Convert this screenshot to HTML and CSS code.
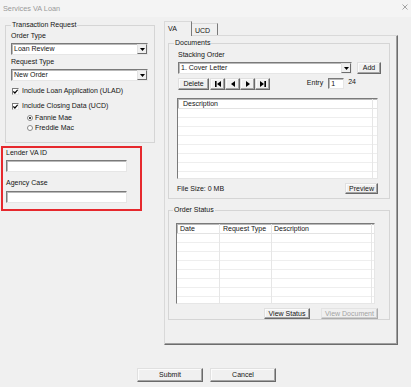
FILE: index.html
```html
<!DOCTYPE html>
<html>
<head>
<meta charset="utf-8">
<title>Services VA Loan</title>
<link rel="stylesheet" href="styles.css">
</head>
<body>
<div class="window">
  <div class="titlebar">
    <span class="title">Services VA Loan</span>
    <svg class="close" width="6" height="6" viewBox="0 0 6 6"><path d="M0.5 0.5 L5.5 5.5 M5.5 0.5 L0.5 5.5" stroke="#9a9a9a" stroke-width="0.9" fill="none"/></svg>
  </div>
  <div class="main">
    <div class="left">
      <fieldset class="group tx">
        <legend>Transaction Request</legend>
        <div class="lbl m3">Order Type</div>
        <div class="select m3"><span class="val">Loan Review</span><span class="drop"><svg width="5" height="3" viewBox="0 0 5 3"><path d="M0 0 H5 L2.5 3 Z" fill="#000"/></svg></span></div>
        <div class="lbl m3">Request Type</div>
        <div class="select m3"><span class="val">New Order</span><span class="drop"><svg width="5" height="3" viewBox="0 0 5 3"><path d="M0 0 H5 L2.5 3 Z" fill="#000"/></svg></span></div>
        <div class="check m6"><span class="box"><svg width="5" height="5" viewBox="0 0 5 5"><path d="M0.3 2.4 L1.9 4 L4.7 0.8" stroke="#000" stroke-width="1.2" fill="none"/></svg></span>Include Loan Application (ULAD)</div>
        <div class="check m7"><span class="box"><svg width="5" height="5" viewBox="0 0 5 5"><path d="M0.3 2.4 L1.9 4 L4.7 0.8" stroke="#000" stroke-width="1.2" fill="none"/></svg></span>Include Closing Data (UCD)</div>
        <div class="radio m4"><span class="dot on"></span>Fannie Mae</div>
        <div class="radio m2"><span class="dot"></span>Freddie Mac</div>
      </fieldset>
      <div class="highlight">
        <div class="lbl">Lender VA ID</div>
        <div class="input m3"></div>
        <div class="lbl m7">Agency Case</div>
        <div class="input m4"></div>
      </div>
    </div>
    <div class="right">
      <div class="tabs">
        <div class="tab active">VA</div>
        <div class="tab">UCD</div>
      </div>
      <div class="panel">
        <fieldset class="group docs">
          <legend>Documents</legend>
          <div class="lbl m4">Stacking Order</div>
          <div class="row r1 m3">
            <div class="select wide"><span class="val">1. Cover Letter</span><span class="drop"><svg width="5" height="3" viewBox="0 0 5 3"><path d="M0 0 H5 L2.5 3 Z" fill="#000"/></svg></span></div>
            <div class="btn add">Add</div>
          </div>
          <div class="row r2 m4">
            <div class="btn del">Delete</div>
            <div class="nav">
              <div class="btn navbtn"><svg width="6" height="6" viewBox="0 0 6 6"><rect x="0" y="0" width="1.6" height="6" fill="#000"/><path d="M6 0 V6 L2 3 Z" fill="#000"/></svg></div>
              <div class="btn navbtn"><svg width="4" height="6" viewBox="0 0 4 6"><path d="M4 0 V6 L0 3 Z" fill="#000"/></svg></div>
              <div class="btn navbtn"><svg width="4" height="6" viewBox="0 0 4 6"><path d="M0 0 V6 L4 3 Z" fill="#000"/></svg></div>
              <div class="btn navbtn"><svg width="6" height="6" viewBox="0 0 6 6"><path d="M0 0 V6 L4 3 Z" fill="#000"/><rect x="4.4" y="0" width="1.6" height="6" fill="#000"/></svg></div>
            </div>
            <div class="entry">
              <span class="entry-lbl">Entry</span>
              <span class="entry-input">1</span>
              <span class="entry-count">24</span>
            </div>
          </div>
          <div class="list docs-list m8">
            <div class="col c-desc"><div class="hd">Description</div><div class="bd"></div></div>
            <div class="col c-fill"><div class="hd"></div><div class="bd"></div></div>
          </div>
          <div class="row r3 m4">
            <span class="filesize">File Size: 0 MB</span>
            <div class="btn preview">Preview</div>
          </div>
        </fieldset>
        <fieldset class="group status">
          <legend>Order Status</legend>
          <div class="list status-list m9">
            <div class="col c-date"><div class="hd">Date</div><div class="bd"></div></div>
            <div class="col c-type"><div class="hd">Request Type</div><div class="bd"></div></div>
            <div class="col c-sdesc"><div class="hd">Description</div><div class="bd"></div></div>
            <div class="col c-fill"><div class="hd"></div><div class="bd"></div></div>
          </div>
          <div class="row r4 m4">
            <div class="btn vstatus">View Status</div>
            <div class="btn vdoc disabled">View Document</div>
          </div>
        </fieldset>
      </div>
    </div>
  </div>
  <div class="footer">
    <div class="btn big">Submit</div>
    <div class="btn big">Cancel</div>
  </div>
</div>
</body>
</html>
```

FILE: styles.css
```css
* { box-sizing: border-box; }
html, body { margin: 0; padding: 0; }
body {
  width: 411px;
  height: 387px;
  overflow: hidden;
  background: #f0f0f0;
  font: 7px/8px "Liberation Sans", Arial, sans-serif;
  color: #141414;
}
.window { width: 411px; height: 387px; }

.titlebar {
  height: 17px;
  background: #f4f4f4;
  display: flex;
  align-items: center;
  justify-content: space-between;
  padding: 0 3px;
}
.title { color: #9a9a9a; font-size: 7.3px; }
.close { margin-top: -3px; }

.m2 { margin-top: 2px; }
.m3 { margin-top: 3px; }
.m4 { margin-top: 4px; }
.m6 { margin-top: 6px; }
.m7 { margin-top: 7px; }
.m8 { margin-top: 8px; }
.m9 { margin-top: 9px; }

.main {
  display: flex;
  gap: 9px;
  align-items: flex-start;
  height: 328px;
}
.left { width: 155px; }

.group {
  margin: 0;
  border: 1px solid #d5d5d5;
  min-width: 0;
}
.group legend {
  padding: 0 1px;
  line-height: 8px;
}

.tx {
  margin: 4px 0 0 5px;
  width: 150px;
  padding: 0 6px 10px 5px;
}
.lbl { height: 8px; line-height: 8px; white-space: nowrap; }

.select {
  height: 12px;
  background: #fff;
  border: 1px solid;
  border-color: #7a7a7a #e6e6e6 #e6e6e6 #7a7a7a;
  box-shadow: inset 1px 1px 0 #b9b9b9;
  display: flex;
  align-items: center;
  justify-content: space-between;
  padding: 0 0 0 2px;
}
.select .val { line-height: 8px; }
.select .drop {
  width: 10px;
  height: 10px;
  background: #f0f0f0;
  border: 1px solid;
  border-color: #e3e3e3 #6d6d6d #6d6d6d #e3e3e3;
  display: flex;
  align-items: center;
  justify-content: center;
}

.check, .radio {
  display: flex;
  align-items: center;
  height: 8px;
  white-space: nowrap;
}
.check { margin-left: 1px; }
.check .box {
  width: 7px;
  height: 7px;
  background: #fff;
  border: 1px solid;
  border-color: #7a7a7a #e6e6e6 #e6e6e6 #7a7a7a;
  margin-right: 3px;
  display: flex;
  align-items: center;
  justify-content: center;
}
.radio { margin-left: 16px; }
.radio .dot {
  width: 6px;
  height: 6px;
  border-radius: 50%;
  background: #fff;
  border: 1px solid #8a8a8a;
  margin-right: 2px;
  display: flex;
  align-items: center;
  justify-content: center;
}
.radio .dot.on::after {
  content: "";
  width: 2px;
  height: 2px;
  border-radius: 50%;
  background: #000;
}

.highlight {
  margin: 3px 0 0 1px;
  width: 141px;
  border: 2px solid #e6282d;
  padding: 1px 0 6px 3px;
}
.input {
  width: 121px;
  height: 12px;
  background: #fff;
  border: 1px solid;
  border-color: #7a7a7a #e6e6e6 #e6e6e6 #7a7a7a;
  box-shadow: inset 1px 1px 0 #b9b9b9;
}

.right { width: 234px; }
.tabs {
  height: 18px;
  display: flex;
  align-items: flex-end;
}
.tab {
  background: #f0f0f0;
  border-top: 1px solid #d9d9d9;
  border-right: 1px solid #7a7a7a;
  line-height: 8px;
  white-space: nowrap;
}
.tab.active {
  width: 28px;
  height: 15px;
  margin-bottom: -1px;
  position: relative;
  z-index: 1;
  border-left: 1px solid #d9d9d9;
  padding: 3px 0 0 3px;
}
.tab:not(.active) {
  width: 26px;
  height: 12px;
  padding: 3px 0 0 3px;
}

.panel {
  height: 310px;
  border: 1px solid;
  border-color: #d9d9d9 #6d6d6d #6d6d6d #d9d9d9;
  box-shadow: inset -1px -1px 0 #a0a0a0;
  padding: 0 0 0 3px;
}

.docs {
  margin-top: 3px;
  width: 222px;
  padding: 0 8px 4px 9px;
}
.docs legend { margin-left: -4px; }
.status {
  margin-top: 7px;
  width: 222px;
  padding: 0 8px 0 7px;
}
.status legend { margin-left: -3px; }

.row { display: flex; }
.r1 { gap: 5px; }
.wide { width: 174px; }

.btn {
  background: #f0f0f0;
  border: 1px solid;
  border-color: #e0e0e0 #6a6a6a #6a6a6a #e0e0e0;
  box-shadow: inset -1px -1px 0 #a5a5a5, inset 1px 1px 0 #fbfbfb;
  display: flex;
  align-items: center;
  justify-content: center;
  white-space: nowrap;
  line-height: 8px;
}
.add { width: 24px; height: 12px; }
.r2 { height: 12px; align-items: flex-start; }
.del { width: 31px; height: 12px; }
.nav { display: flex; margin-left: 1px; }
.navbtn { width: 15px; height: 12px; }
.entry {
  margin-left: auto;
  margin-right: 25px;
  display: flex;
  align-items: flex-start;
}
.entry-lbl { margin-top: 1px; }
.entry-input {
  width: 16px;
  height: 11px;
  margin-left: 5px;
  background: #fff;
  border: 1px solid;
  border-color: #7a7a7a #e6e6e6 #e6e6e6 #7a7a7a;
  box-shadow: inset 1px 1px 0 #b9b9b9;
  padding-left: 2px;
  line-height: 9px;
}
.entry-count { margin-left: 4px; }

.list {
  background: #fff;
  border: 1px solid;
  border-color: #7a7a7a #e6e6e6 #e6e6e6 #7a7a7a;
  box-shadow: inset 1px 1px 0 #b9b9b9;
  display: flex;
  height: 81px;
}
.docs-list { width: 201px; margin-left: -1px; }
.status-list { width: 199px; }
.col {
  display: flex;
  flex-direction: column;
  border-right: 1px solid #e6e6e6;
}
.col .hd {
  height: 10px;
  line-height: 10px;
  border-bottom: 1px solid #e3e3e3;
  white-space: nowrap;
}
.col .bd {
  flex: 1;
  background: repeating-linear-gradient(to bottom, #fff 0, #fff 8px, #eeeeee 8px, #eeeeee 9px);
}
.c-fill { flex: 1; border-right: none; }
.c-desc { width: 195px; }
.c-desc .hd { padding-left: 5px; }
.c-date { width: 43px; }
.c-date .hd { padding-left: 3px; }
.c-type { width: 52px; }
.c-type .hd { padding-left: 3px; }
.c-sdesc { width: 100px; }
.c-sdesc .hd { padding-left: 2px; }

.r3 {
  height: 11px;
  align-items: center;
  justify-content: space-between;
}
.filesize { margin-left: -1px; }
.preview { width: 33px; height: 11px; margin-right: 3px; }

.r4 {
  height: 11px;
  justify-content: flex-end;
  gap: 11px;
  padding-right: 3px;
}
.vstatus { width: 46px; height: 11px; }
.vdoc { width: 57px; height: 11px; }
.btn.disabled {
  color: #a3a3a3;
  border-color: #e3e3e3 #adadad #adadad #e3e3e3;
  box-shadow: inset -1px -1px 0 #cfcfcf;
}

.footer {
  display: flex;
  gap: 7px;
  padding: 23px 0 0 137px;
}
.big { width: 66px; height: 14px; }
```
